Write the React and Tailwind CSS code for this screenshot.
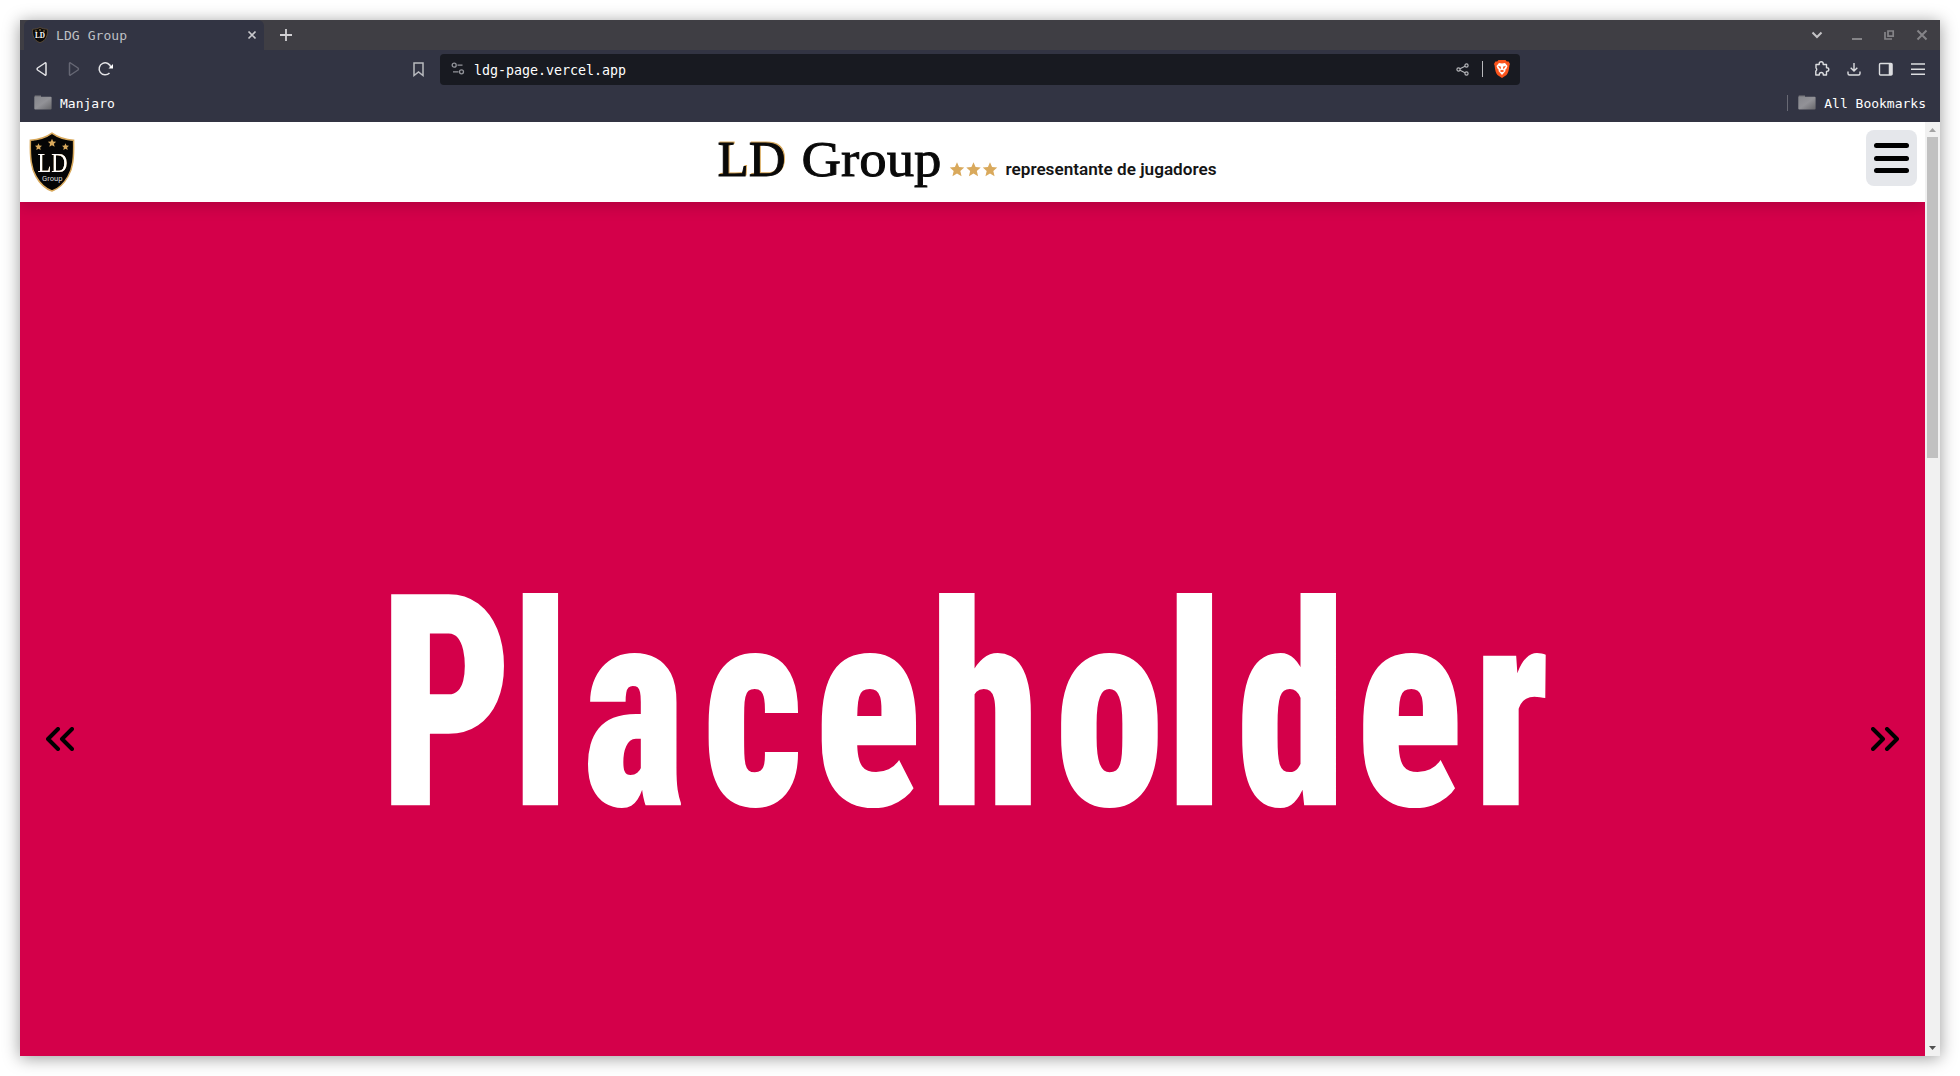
import React from "react";

const STAR = "M0-7.6 2.2-2.6 7.6-2.2 3.5 1.5 4.8 7 0 4.2-4.8 7-3.5 1.5-7.6-2.2-2.2-2.6Z";

function Shield({ className }) {
  return (
    <svg className={className} viewBox="0 0 46 60">
      <path
        d="M23 1.2C17 5.500 9 8 1.400 8.300 1 26 2 36 7 44.500 11.500 52.500 17 57 23 59 29 57 34.500 52.500 39 44.500 44 36 45 26 44.600 8.300 37 8 29 5.500 23 1.200Z"
        fill="#050505"
        stroke="#d9a95c"
        strokeWidth="1.500"
      />
      <g fill="#d9a95c">
        <path d={STAR} transform="translate(23 11) scale(.55)" />
        <path d={STAR} transform="translate(9.500 14.700) scale(.46)" />
        <path d={STAR} transform="translate(36.500 14.700) scale(.46)" />
      </g>
      <text className="drop-shadow-[0.5px_0_0_#d9a95c]" x="8.500" y="40" fontSize="27" textLength="30" lengthAdjust="spacingAndGlyphs" fill="#fff" fontFamily="Liberation Serif, serif">LD</text>
      <text x="13" y="49.300" fontSize="7.500" textLength="20.500" lengthAdjust="spacingAndGlyphs" fill="#ddd" fontFamily="Roboto, sans-serif">Group</text>
    </svg>
  );
}

function Favicon() {
  return (
    <svg className="h-4 w-4" viewBox="0 0 16 16">
      <path d="M8 .5C6 1.500 3 2.200.600 2.300.300 9 2 13.500 8 15.600 14 13.500 15.700 9 15.400 2.300 13 2.200 10 1.500 8 .5Z" fill="#0a0a0a" stroke="#6e5738" strokeWidth=".7" />
      <g fill="#d9a95c">
        <circle cx="8" cy="3" r=".8" />
        <circle cx="4" cy="4" r=".7" />
        <circle cx="12" cy="4" r=".7" />
      </g>
      <text x="3" y="11" fontSize="7.500" textLength="10" lengthAdjust="spacingAndGlyphs" fill="#fff" fontWeight="700" fontFamily="Liberation Serif, serif">LD</text>
    </svg>
  );
}

function Folder() {
  return (
    <svg className="h-[15px] w-[18px]" viewBox="0 0 18 15">
      <defs>
        <linearGradient id="folder" x1="0" y1="0" x2="1" y2="1">
          <stop offset="0" stopColor="#85868c" />
          <stop offset=".5" stopColor="#929297" />
          <stop offset="1" stopColor="#66666a" />
        </linearGradient>
      </defs>
      <path d="M1 .5h6v2H.5V1Z" fill="#77777c" />
      <rect x=".3" y="1.700" width="17.300" height="12.800" rx="1" fill="url(#folder)" />
    </svg>
  );
}

function TitleBar() {
  return (
    <div className="flex h-[30px] items-start bg-[#3f3e44] pl-1">
      <div className="flex h-[30px] w-[240px] items-center rounded-t-md bg-[#323443] pr-[7px] pl-2">
        <Favicon />
        <span className="mt-px ml-[8px] flex-1 text-[13px] leading-none tracking-[0.08px] text-[#bfc0c5]">LDG Group</span>
        <svg className="h-[10px] w-[10px]" viewBox="0 0 10 10" stroke="#c9c9cd" strokeWidth="1.700">
          <path d="m1.500 1.500 7 7m0-7-7 7" />
        </svg>
      </div>
      <svg className="mt-[9px] ml-[16px] h-3 w-3" viewBox="0 0 12 12" stroke="#d2d1d4" strokeWidth="1.800">
        <path d="M6 0v12M0 6h12" />
      </svg>
      <div className="flex-1" />
      <svg className="h-[30px] w-[130px]" viewBox="0 0 130 30" fill="none">
        <path d="m2.500 12.500 4.500 4.500 4.500-4.500" stroke="#c4c3c6" strokeWidth="2" />
        <path d="M42 19h10" stroke="#858488" strokeWidth="2" />
        <path d="M78 11h5.200v5.200H78ZM75 12v7h7" stroke="#858488" strokeWidth="1.700" />
        <path d="m107.500 10.500 9 9m0-9-9 9" stroke="#858488" strokeWidth="2" />
      </svg>
    </div>
  );
}

function Toolbar() {
  return (
    <div className="flex h-[38px] items-center">
      <svg className="h-[38px] w-[100px]" viewBox="0 0 100 38" fill="none" strokeLinejoin="round" strokeWidth="1.500">
        <path d="M26 13.500v11q0 1-1 .5l-7.500-5q-1-1 0-2l7.500-5q1-.500 1 .5Z" stroke="#e3e3e6" />
        <path d="M49.500 13.500v11q0 1 1 .5l7.500-5q1-1 0-2l-7.500-5q-1-.500-1 .5Z" stroke="#666774" />
        <path d="M91 17.500a6 6 0 1 0-1.500 5.500" stroke="#e3e3e6" />
        <path d="M93 14v4.500h-4.500Z" fill="#fff" />
      </svg>
      <div className="w-[293px]" />
      <svg className="h-[15px] w-[11px]" viewBox="0 0 11 15">
        <path d="M1 1h9v12.500L5.500 10 1 13.500Z" fill="none" stroke="#b9babf" strokeWidth="1.500" />
      </svg>
      <div className="ml-4 flex h-[31px] w-[1080px] items-center rounded bg-[#181a21] pr-[10px] pl-[11px]">
        <svg className="h-3.5 w-3.5" viewBox="0 0 14 14" fill="none" stroke="#92949a" strokeWidth="1.300">
          <circle cx="3.200" cy="3.200" r="2" />
          <path d="M6.500 3.200h5M2 9.800h5.500" />
          <circle cx="10.500" cy="9.800" r="2" />
        </svg>
        <span className="mt-[3px] ml-[9px] flex-1 text-[13.300px] leading-none text-white">ldg-page.vercel.app</span>
        <svg className="h-[13px] w-[13px]" viewBox="0 0 13 13" fill="none" stroke="#b4b5b9" strokeWidth="1.200">
          <circle cx="2.500" cy="6.500" r="1.600" />
          <circle cx="10.500" cy="2.500" r="1.600" />
          <circle cx="10.500" cy="10.500" r="1.600" />
          <path d="m4 5.700 5-2.500m-5 4 5 2.500" />
        </svg>
        <div className="mr-[11px] ml-[13px] h-4 w-px bg-[#b8b9bc]" />
        <svg className="h-[18px] w-4" viewBox="0 0 16 18">
          <path d="m4.500 0-1.300 1.500L1.400 1.400 0 4l.6 1.500C1 10 2 13.500 3.500 15L8 18l4.500-3C14 13.500 15 10 15.400 5.500L16 4l-1.400-2.600-1.800.1L11.500 0Z" fill="#fb541c" />
          <path d="M5 3 2.500 6l1.300 3 1 .8L4.500 11 8 15l3.500-4-.300-1.200 1-.8 1.300-3L11 3 8 3.500Z" fill="#fff" />
          <path d="m4 5.800 3 .9L6.500 9.500Zm8 0-3 .9.500 2.800ZM5.500 11 8 9.800l2.500 1.200L8 12.200Z" fill="#fb541c" />
        </svg>
      </div>
      <div className="flex-1" />
      <svg className="h-[38px] w-[125px]" viewBox="0 0 125 38" fill="none" stroke="#dcdde0" strokeWidth="1.400">
        <path d="M1 14.500h3.200v-.7a2 2 0 0 1 4 0v.7h3.300v3.300h.5a1.800 1.800 0 0 1 0 3.600h-.5v3.600H8.300v-.5a2 2 0 0 0-4 0v.5H.8v-4a1.800 1.800 0 0 0 .2-3Z" strokeLinejoin="round" />
        <path d="M39 13v8m-3.300-3.300L39 21l3.300-3.300" />
        <path d="M33 21.500v2q0 1.500 1.500 1.500h9q1.500 0 1.500-1.500v-2" />
        <rect x="64.500" y="13.500" width="12.500" height="11.500" rx="1" />
        <path d="M75.500 13.500v11.500" strokeWidth="3.500" />
        <path d="M96 14h14m-14 5.300h14M96 24.300h14" />
      </svg>
    </div>
  );
}

function BookmarksBar() {
  return (
    <div className="flex h-[34px] items-center pr-[14px] pb-[5px] pl-[14px] text-[13px] leading-none text-white">
      <Folder />
      <span className="mt-px ml-2 flex-1">Manjaro</span>
      <div className="mr-[10px] h-4 w-px bg-[#686974]" />
      <Folder />
      <span className="mt-px ml-2">All Bookmarks</span>
    </div>
  );
}

function SiteHeader() {
  return (
    <header className="relative z-10 flex h-20 shrink-0 items-start justify-between bg-white pr-2 pl-[9px] shadow-[0_4px_14px_rgba(0,0,0,0.17)]">
      <Shield className="mt-[10px] h-[60px] w-[46px]" />
      <svg className="mr-[12px] h-20 w-[510px]" viewBox="0 0 510 80">
        <g fontFamily="Liberation Serif, serif" fontSize="50" strokeWidth=".9" fill="#090909" stroke="#090909">
          <text className="drop-shadow-[1.5px_-1px_0_#d9a95c]" x="7.500" y="54" textLength="68" lengthAdjust="spacingAndGlyphs">LD</text>
          <text x="91.500" y="54" textLength="140" lengthAdjust="spacingAndGlyphs">Group</text>
        </g>
        <g fill="#d9a95c">
          <path d={STAR} transform="translate(247 47.500) scale(.95)" />
          <path d={STAR} transform="translate(263.500 47.500) scale(.95)" />
          <path d={STAR} transform="translate(280 47.500) scale(.95)" />
        </g>
        <text x="295.500" y="53.300" textLength="211" lengthAdjust="spacingAndGlyphs" fontSize="16" fontWeight="600" fontFamily="Roboto, sans-serif" fill="#151515">
          representante de jugadores
        </text>
      </svg>
      <button className="mt-2 flex h-14 w-[51px] flex-col items-center gap-[7.500px] rounded-lg bg-gray-200 pt-[13px]">
        <span className="h-[5px] w-[35px] rounded-full bg-black" />
        <span className="h-[5px] w-[35px] rounded-full bg-black" />
        <span className="h-[5px] w-[35px] rounded-full bg-black" />
      </button>
    </header>
  );
}

/* Horizontal squeeze of the headline and the pen position of each of its letters. */
const SQUEEZE = 0.78;
const PEN = [379.5, 511, 582, 702, 814, 930, 1054.5, 1165, 1236, 1355.5, 1473];
const pens = (list) => list.map((x) => (x - 372.5) / SQUEEZE).join(" ");

function Slide() {
  return (
    <section className="min-h-0 flex-1 overflow-hidden bg-[#d4004a]">
      <div className="flex h-[1073px] items-center justify-between px-[26px]">
        <svg className="h-6 w-7" viewBox="0 0 28 24" fill="none" stroke="#000" strokeWidth="4" strokeLinecap="round" strokeLinejoin="round">
          <path d="M12 2 2 12l10 10M26 2 16 12l10 10" />
        </svg>
        <svg className="h-[400px] w-[1200px] overflow-visible" viewBox="0 0 1200 400">
          <text
            transform="scale(0.78 1)"
            y="266.300"
            fontSize="297"
            fontWeight="900"
            fontStretch="75%"
            fontFamily="Roboto, sans-serif"
            fill="#fff"
          >
            <tspan x={pens(PEN.slice(0, 1))}>P</tspan><tspan x={pens(PEN.slice(1))} fontSize="283">laceholder</tspan>
          </text>
        </svg>
        <svg className="h-6 w-7" viewBox="0 0 28 24" fill="none" stroke="#000" strokeWidth="4" strokeLinecap="round" strokeLinejoin="round">
          <path d="m2 2 10 10L2 22M16 2l10 10-10 10" />
        </svg>
      </div>
    </section>
  );
}

function Scrollbar() {
  return (
    <div className="flex w-[15px] flex-col items-center bg-[#f1f1f1]">
      <svg className="h-[15px] w-[15px]" viewBox="0 0 15 15"><path d="M4 10h7L7.500 6Z" fill="#a3a3a3" /></svg>
      <div className="h-[321px] w-[11px] bg-[#c1c1c1]" />
      <div className="flex-1" />
      <svg className="h-[15px] w-[15px]" viewBox="0 0 15 15"><path d="M4 5h7L7.500 9Z" fill="#505050" /></svg>
    </div>
  );
}

export default function App() {
  return (
    <div className="h-[1076px] w-[1960px] overflow-hidden bg-white p-5 font-['DejaVu_Sans_Mono',monospace]">
      <div className="flex h-[1036px] w-[1920px] flex-col bg-[#323443] shadow-[0_2px_16px_rgba(0,0,0,0.4)]">
        <TitleBar />
        <Toolbar />
        <BookmarksBar />
        <div className="flex min-h-0 flex-1">
          <main className="flex flex-1 flex-col overflow-hidden">
            <SiteHeader />
            <Slide />
          </main>
          <Scrollbar />
        </div>
      </div>
    </div>
  );
}
